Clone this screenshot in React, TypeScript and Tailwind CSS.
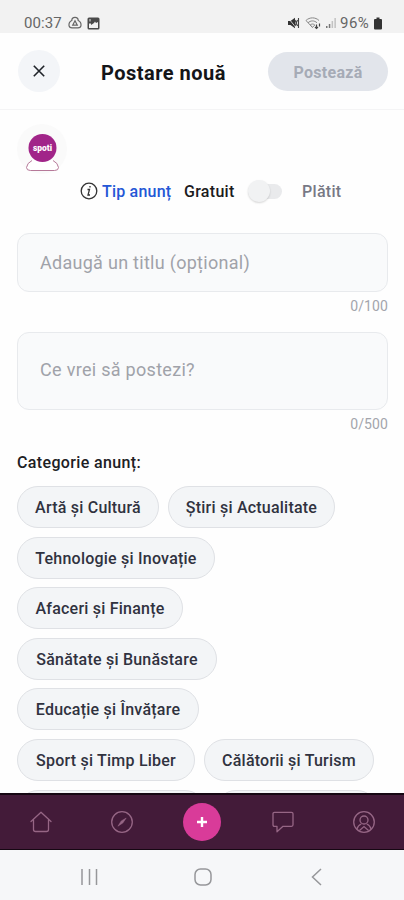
import React, { useState } from 'react';

const categories = [
    { name: 'Artă și Cultură', width: 'w-[142px]' },
    { name: 'Știri și Actualitate', width: 'w-[167px]' },
    { name: 'Tehnologie și Inovație', width: 'w-[198px]' },
    { name: 'Afaceri și Finanțe', width: 'w-[166px]' },
    { name: 'Sănătate și Bunăstare', width: 'w-[200px]' },
    { name: 'Educație și Învățare', width: 'w-[182px]' },
    { name: 'Sport și Timp Liber', width: 'w-[178px]' },
    { name: 'Călătorii și Turism', width: 'w-[170px]' },
    // next row, only its top edge shows above the nav bar
    { name: '', width: 'w-[189px]' },
    { name: '', width: 'w-[163px]' }
];

function StatusBar() {
    return (
        <div className="flex h-[33px] shrink-0 items-center justify-between bg-[#f2f2f2] pt-[13px] pr-[22px] pl-6 text-[#666]">
            <div className="flex items-center">
                <span className="w-[39px] text-[15px] leading-5 tracking-[0.1px]">00:37</span>
                <svg className="ml-[5px]" width="14" height="14" viewBox="0 0 14 14" fill="none" stroke="#666" strokeWidth="1.2">
                    <path d="M3.800 4.500C3.800.3 10.200.3 10.200 4.500 12.300 5.500 13.200 7.500 13 9.500c-.2 1.800-1.500 2.300-3 2.300H4c-1.500 0-2.800-.5-3-2.300-.2-2 .7-4 2.800-5Z" />
                    <path d="m7 4.800 2.300 4.400H4.700L7 4.800Z" />
                </svg>
                <svg className="ml-[5px]" width="13" height="13" viewBox="0 0 13 13">
                    <rect x=".5" y=".5" width="12" height="12" rx="1.5" fill="#4a4a4a" />
                    <path d="M2 9V6.500h2V8l3-2 1-1.500 1 1.500 2-1V11H2Z" fill="#f2f2f2" />
                    <path d="M2 2h2v2.500H2Z" fill="#999" />
                </svg>
            </div>
            <div className="flex items-center">
                <svg className="-ml-0.5" width="14" height="12" viewBox="0 0 14 12">
                    <path d="M1 4h2.500L8 .8v10.400L3.500 8H1Z" fill="#333" />
                    <path d="M1.200 1 8.500 10" stroke="#f2f2f2" strokeWidth=".8" />
                    <path d="M11.500 1v10M8 3l2.500 6M10.500 3 8 9" stroke="#444" strokeWidth="1.100" />
                </svg>
                <svg className="ml-1" width="17" height="14" viewBox="0 0 17 14" fill="none" stroke="#888">
                    <path d="M1 4.500C4.500 1 10.500 1 14 4.500M3 6.800c2.600-2.500 6.400-2.500 9 0M5.200 9c1.400-1.300 3.200-1.300 4.600 0L7.500 11.300ZM1 4.500l6.500 7" />
                    <path d="M11.500 8.500v4M10 11l1.500 1.500L13 11M14.500 7.500v3" stroke="#444" strokeWidth="1.200" />
                </svg>
                <svg className="ml-[3px]" width="12" height="12" viewBox="0 0 12 12">
                    <path d="M1 9h1.500v2H1ZM3.800 7h1.500v4H3.800Z" fill="#777" />
                    <path d="M6.600 4h1.500v7H6.600ZM9.400 1h1.500v10H9.400Z" fill="#c2c2c2" />
                </svg>
                <span className="ml-[3px] w-[33px] text-[15px] leading-5 tracking-[0.5px]">96%</span>
                <svg className="-mr-px" width="10" height="13" viewBox="0 0 9 13" fill="#333">
                    <path d="M3 .5h3V2h1.500Q8.500 2 8.500 3v8.500q0 1-1 1h-6q-1 0-1-1V3q0-1 1-1H3Z" />
                </svg>
            </div>
        </div>
    );
}

function BottomNav() {
    return (
        <nav className="grid h-[57px] shrink-0 grid-cols-5 items-center justify-items-center border-t-2 border-b-[1.5px] border-[#160713] bg-[#431b39] pl-px text-[#966685]">
            <svg width="24" height="24" viewBox="0 0 24 24" fill="none" stroke="currentColor" strokeWidth="1.300" strokeLinejoin="round" strokeLinecap="round">
                <path d="M2 11.500 12 2.300l10 9.200M4.500 10v9.500q0 2 2 2h11q2 0 2-2V10" />
            </svg>
            <svg width="24" height="24" viewBox="0 0 24 24" fill="none" stroke="currentColor" strokeWidth="1.300">
                <circle cx="12" cy="12" r="10.300" />
                <path d="m16.200 8-5 3-3.300 5.200 5-3.300Z" fill="currentColor" strokeWidth=".5" />
            </svg>
            <button className="flex h-[38px] w-[38px] items-center justify-center rounded-full bg-[#d93b99]">
                <svg width="12" height="12" viewBox="0 0 12 12" stroke="#fff" strokeWidth="2.400">
                    <path d="M6 1v10M1 6h10" />
                </svg>
            </button>
            <svg width="24" height="24" viewBox="0 0 24 24" fill="none" stroke="currentColor" strokeWidth="1.300" strokeLinejoin="round">
                <path d="M3.500 2.300h17q1.500 0 1.500 1.500v11q0 1.500-1.500 1.500H12L6 21.800v-5.500H3.500Q2 16.300 2 14.800v-11q0-1.500 1.500-1.500Z" />
            </svg>
            <svg width="24" height="24" viewBox="0 0 24 24" fill="none" stroke="currentColor" strokeWidth="1.300">
                <circle cx="12" cy="12" r="10.300" />
                <circle cx="12" cy="10" r="4" />
                <path d="M4.800 19.200c1-3 2.500-4.500 4.500-5.200M19.200 19.200c-1-3-2.500-4.500-4.500-5.200M7.500 20.500 12 16.500l4.500 4" />
            </svg>
        </nav>
    );
}

export default function App() {
    const [title, setTitle] = useState('');
    const [message, setMessage] = useState('');

    return (
        <div className="flex h-[900px] w-[404px] flex-col overflow-hidden bg-[#fefefe] font-['Roboto',sans-serif]">
            <StatusBar />

            <header className="flex h-[77px] shrink-0 items-center border-b border-[#f4f4f5] pr-4 pl-[18px]">
                <button className="flex h-[42px] w-[42px] items-center justify-center rounded-full bg-[#f3f5f8]">
                    <svg className="-ml-px" width="12" height="12" viewBox="0 0 12 12" stroke="#1f2329" strokeWidth="1.600">
                        <path d="m.8.8 10.400 10.400M11.200.8.8 11.200" />
                    </svg>
                </button>
                <h1 className="ml-[41px] flex-1 pt-[3px] text-xl leading-6 font-bold tracking-[0.48px] whitespace-nowrap text-[#141518]">Postare nouă</h1>
                <button className="h-[39px] w-[120px] rounded-full bg-[#e2e5eb] pt-[3px] text-base font-bold tracking-[0.3px] text-[#a6abb6]">Postează</button>
            </header>

            <main className="flex min-h-0 flex-1 flex-col overflow-hidden pr-4 pl-[17px]">
                <div className="mt-[14px] flex h-[50px] w-[50px] shrink-0 items-end justify-center rounded-full bg-[#fafafa]">
                    <svg className="font-['Roboto',sans-serif]" width="34" height="40" viewBox="0 0 34 40">
                        <path d="M7 26.500Q2 29 1.500 33.500q0 3 4 3h24q4 0 4-3Q33 29 28 26.500" fill="#fff" stroke="#b67999" />
                        <path d="M10 27 17.500 28.500l7.500-1.500" fill="none" stroke="#fff" strokeWidth="4" />
                        <circle cx="17.500" cy="14" r="14" fill="#a12589" />
                        <text x="17.500" y="17" textAnchor="middle" fontSize="8.500" fontWeight="900" fill="#fff">spoti</text>
                    </svg>
                </div>

                <div className="mt-px ml-[63px] flex h-8 shrink-0 items-center pt-px text-base font-medium whitespace-nowrap">
                    <svg className="-mt-px" width="18" height="18" viewBox="0 0 18 18" fill="none" stroke="#333" strokeWidth="1.300">
                        <circle cx="9" cy="9" r="7.800" />
                        <path d="M7.500 7.500h2L8 13h2M10 4v1.500" />
                    </svg>
                    <span className="ml-1 w-[70px] tracking-[0.2px] text-[#2457d6]">Tip anunț</span>
                    <span className="ml-3 w-[51px] tracking-[0.3px] text-[#1b1b1d]">Gratuit</span>
                    <div className="-mt-px ml-[13px] flex h-[23px] w-[34px] items-center">
                        <div className="h-[15px] w-full rounded-full bg-[#e9eaec]">
                            <div className="-mt-1 h-[22px] w-[22px] rounded-full bg-[#f1f2f3] shadow-[0_1px_2px_rgba(0,0,0,0.16)]" />
                        </div>
                    </div>
                    <span className="ml-[20px] tracking-[0.3px] text-[#777985]">Plătit</span>
                </div>

                <input
                    type="text"
                    value={title}
                    onChange={e => setTitle(e.target.value)}
                    placeholder="Adaugă un titlu (opțional)"
                    className="mt-[26px] h-[59px] w-full shrink-0 rounded-xl border border-[#e8eaed] bg-[#f9fafb] px-[22px] text-lg tracking-[0.28px] outline-none placeholder:text-[#a0a2a9]"
                />
                <div className="mt-1 h-5 shrink-0 text-right text-sm leading-5 tracking-[0.1px] text-[#a3a5ac]">{title.length}/100</div>

                <textarea
                    value={message}
                    onChange={e => setMessage(e.target.value)}
                    placeholder="Ce vrei să postezi?"
                    className="mt-4 h-[78px] w-full shrink-0 resize-none rounded-xl border border-[#e8eaed] bg-[#f9fafb] px-[22px] pt-[23px] text-lg leading-7 tracking-[0.3px] outline-none placeholder:text-[#a0a2a9]"
                />
                <div className="mt-1 h-5 shrink-0 text-right text-sm leading-5 tracking-[0.1px] text-[#a3a5ac]">{message.length}/500</div>

                <h2 className="mt-[17px] shrink-0 text-base leading-6 font-medium tracking-[0.36px] text-[#202024]">Categorie anunț:</h2>
                <div className="mt-[11px] mr-2 flex flex-wrap gap-x-[9px] gap-y-[8.6px]">
                    {categories.map((category, index) => (
                        <button
                            key={index}
                            className={`h-[42px] shrink-0 rounded-full border border-[#dfe1e5] bg-[#f3f5f7] pt-0.5 text-center text-base font-medium tracking-[0.22px] whitespace-nowrap text-[#30323f] ${category.width}`}
                        >
                            {category.name}
                        </button>
                    ))}
                </div>
            </main>

            <BottomNav />

            <div className="flex h-[50px] shrink-0 items-center justify-between bg-[#f6f7f9] pt-[3px] pr-[82px] pl-[81px] text-[#96979a]">
                <svg width="17" height="18" viewBox="0 0 17 18" stroke="currentColor" strokeWidth="1.500">
                    <path d="M1 1v16M8.500 1v16M15.500 1v16" />
                </svg>
                <svg className="-ml-1" width="18" height="18" viewBox="0 0 18 18" fill="none" stroke="currentColor" strokeWidth="1.500">
                    <rect x="1" y="1" width="16" height="16" rx="5.500" />
                </svg>
                <svg width="11" height="18" viewBox="0 0 11 18" fill="none" stroke="currentColor" strokeWidth="1.500">
                    <path d="M10 1 1.500 9l8.500 8" />
                </svg>
            </div>
        </div>
    );
}
